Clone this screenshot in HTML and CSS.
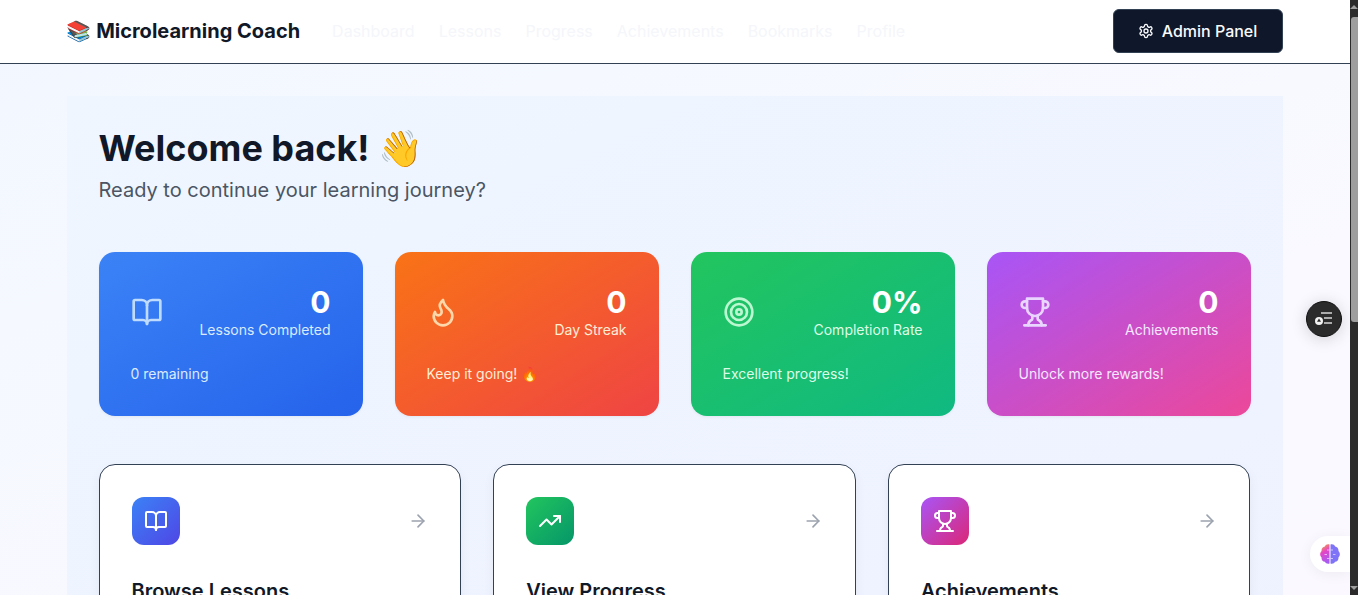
FILE: index.html
```html
<!DOCTYPE html>
<html>
<head>
    <title>Microlearning Coach</title>
    <link rel="stylesheet" href="styles.css">
</head>
<body>
    <div class="page">
        <header class="topbar">
            <div class="topbar-inner">
                <div class="brand"><span class="brand-emoji">📚</span> Microlearning Coach</div>
                <nav class="nav">
                    <a>Dashboard</a>
                    <a>Lessons</a>
                    <a>Progress</a>
                    <a>Achievements</a>
                    <a>Bookmarks</a>
                    <a>Profile</a>
                </nav>
                <button class="admin-button">
                    <svg class="icon-gear" viewBox="0 0 24 24">
                        <path d="M12.22 2h-.44a2 2 0 0 0-2 2v.18a2 2 0 0 1-1 1.73l-.43.25a2 2 0 0 1-2 0l-.15-.08a2 2 0 0 0-2.73.73l-.22.38a2 2 0 0 0 .73 2.73l.15.1a2 2 0 0 1 1 1.72v.51a2 2 0 0 1-1 1.74l-.15.09a2 2 0 0 0-.73 2.73l.22.38a2 2 0 0 0 2.73.73l.15-.08a2 2 0 0 1 2 0l.43.25a2 2 0 0 1 1 1.73V20a2 2 0 0 0 2 2h.44a2 2 0 0 0 2-2v-.18a2 2 0 0 1 1-1.73l.43-.25a2 2 0 0 1 2 0l.15.08a2 2 0 0 0 2.73-.73l.22-.39a2 2 0 0 0-.73-2.73l-.15-.08a2 2 0 0 1-1-1.74v-.5a2 2 0 0 1 1-1.74l.15-.09a2 2 0 0 0 .73-2.73l-.22-.38a2 2 0 0 0-2.73-.73l-.15.08a2 2 0 0 1-2 0l-.43-.25a2 2 0 0 1-1-1.73V4a2 2 0 0 0-2-2z"/>
                        <circle cx="12" cy="12" r="3"/>
                    </svg>
                    Admin Panel
                </button>
            </div>
        </header>

        <div class="content">
            <main class="main">
                <div class="panel">
                    <h1>Welcome back! 👋</h1>
                    <p class="subtitle">Ready to continue your learning journey?</p>

                    <section class="stats">
                        <div class="stat stat-blue">
                            <div class="stat-top">
                                <svg class="stat-icon" viewBox="0 0 24 24">
                                    <path d="M12 7v14"/>
                                    <path d="M3 18a1 1 0 0 1-1-1V4a1 1 0 0 1 1-1h5a4 4 0 0 1 4 4 4 4 0 0 1 4-4h5a1 1 0 0 1 1 1v13a1 1 0 0 1-1 1h-6a3 3 0 0 0-3 3 3 3 0 0 0-3-3z"/>
                                </svg>
                                <div class="stat-value">
                                    <div class="stat-number">0</div>
                                    <div class="stat-label">Lessons Completed</div>
                                </div>
                            </div>
                            <div class="stat-note">0 remaining</div>
                        </div>

                        <div class="stat stat-orange">
                            <div class="stat-top">
                                <svg class="stat-icon" viewBox="0 0 24 24">
                                    <path d="M8.5 14.5A2.5 2.5 0 0 0 11 12c0-1.38-.5-2-1-3-1.072-2.143-.224-4.054 2-6 .5 2.5 2 4.9 4 6.5 2 1.6 3 3.5 3 5.5a7 7 0 1 1-14 0c0-1.153.433-2.294 1-3a2.5 2.5 0 0 0 2.5 2.5z"/>
                                </svg>
                                <div class="stat-value">
                                    <div class="stat-number">0</div>
                                    <div class="stat-label">Day Streak</div>
                                </div>
                            </div>
                            <div class="stat-note">Keep it going! 🔥</div>
                        </div>

                        <div class="stat stat-green">
                            <div class="stat-top">
                                <svg class="stat-icon" viewBox="0 0 24 24">
                                    <circle cx="12" cy="12" r="10"/>
                                    <circle cx="12" cy="12" r="6"/>
                                    <circle cx="12" cy="12" r="2"/>
                                </svg>
                                <div class="stat-value">
                                    <div class="stat-number">0%</div>
                                    <div class="stat-label">Completion Rate</div>
                                </div>
                            </div>
                            <div class="stat-note">Excellent progress!</div>
                        </div>

                        <div class="stat stat-purple">
                            <div class="stat-top">
                                <svg class="stat-icon" viewBox="0 0 24 24">
                                    <path d="M6 9H4.5a2.5 2.5 0 0 1 0-5H6"/>
                                    <path d="M18 9h1.5a2.5 2.5 0 0 0 0-5H18"/>
                                    <path d="M4 22h16"/>
                                    <path d="M10 14.66V17c0 .55-.47.98-.97 1.21C7.85 18.75 7 20.24 7 22"/>
                                    <path d="M14 14.66V17c0 .55.47.98.97 1.21C16.15 18.75 17 20.24 17 22"/>
                                    <path d="M18 2H6v7a6 6 0 0 0 12 0V2Z"/>
                                </svg>
                                <div class="stat-value">
                                    <div class="stat-number">0</div>
                                    <div class="stat-label">Achievements</div>
                                </div>
                            </div>
                            <div class="stat-note">Unlock more rewards!</div>
                        </div>
                    </section>

                    <section class="actions">
                        <div class="action">
                            <div class="action-top">
                                <div class="action-icon action-blue">
                                    <svg viewBox="0 0 24 24">
                                        <path d="M12 7v14"/>
                                        <path d="M3 18a1 1 0 0 1-1-1V4a1 1 0 0 1 1-1h5a4 4 0 0 1 4 4 4 4 0 0 1 4-4h5a1 1 0 0 1 1 1v13a1 1 0 0 1-1 1h-6a3 3 0 0 0-3 3 3 3 0 0 0-3-3z"/>
                                    </svg>
                                </div>
                                <svg class="arrow" viewBox="0 0 24 24"><path d="M5 12h14"/><path d="m12 5 7 7-7 7"/></svg>
                            </div>
                            <h3>Browse Lessons</h3>
                        </div>

                        <div class="action">
                            <div class="action-top">
                                <div class="action-icon action-green">
                                    <svg viewBox="0 0 24 24">
                                        <polyline points="22 7 13.5 15.5 8.5 10.5 2 17"/>
                                        <polyline points="16 7 22 7 22 13"/>
                                    </svg>
                                </div>
                                <svg class="arrow" viewBox="0 0 24 24"><path d="M5 12h14"/><path d="m12 5 7 7-7 7"/></svg>
                            </div>
                            <h3>View Progress</h3>
                        </div>

                        <div class="action">
                            <div class="action-top">
                                <div class="action-icon action-purple">
                                    <svg viewBox="0 0 24 24">
                                        <path d="M6 9H4.5a2.5 2.5 0 0 1 0-5H6"/>
                                        <path d="M18 9h1.5a2.5 2.5 0 0 0 0-5H18"/>
                                        <path d="M4 22h16"/>
                                        <path d="M10 14.66V17c0 .55-.47.98-.97 1.21C7.85 18.75 7 20.24 7 22"/>
                                        <path d="M14 14.66V17c0 .55.47.98.97 1.21C16.15 18.75 17 20.24 17 22"/>
                                        <path d="M18 2H6v7a6 6 0 0 0 12 0V2Z"/>
                                    </svg>
                                </div>
                                <svg class="arrow" viewBox="0 0 24 24"><path d="M5 12h14"/><path d="m12 5 7 7-7 7"/></svg>
                            </div>
                            <h3>Achievements</h3>
                        </div>
                    </section>
                </div>
            </main>
        </div>

        <!-- Floating widgets -->
        <div class="float-toc">
            <svg viewBox="0 0 24 24">
                <path d="M9 6h11M12 11h8M12 16h8"/>
                <circle cx="7" cy="14" r="4" fill="#f2f2f2" stroke="none"/>
                <path d="M7 11.6l2 3.2H5z" fill="#2b2b2b" stroke="none"/>
            </svg>
        </div>
        <div class="float-brain">
            <svg viewBox="2 2 20 20">
                <defs>
                    <linearGradient id="brainLeft" x1="0.3" y1="0" x2="0.6" y2="1">
                        <stop offset="0" stop-color="#f59e42"/>
                        <stop offset="0.4" stop-color="#e346c8"/>
                        <stop offset="1" stop-color="#a45cf5"/>
                    </linearGradient>
                </defs>
                <path fill="url(#brainLeft)" d="M11.5 2.6v18.8c-1.8.6-3.9 0-4.6-1.7-2.2-.2-3.7-2.1-3.3-4.2-1.9-1.5-1.9-4.9 0-6.4-.4-2.3 1.1-4.4 3.3-4.6.7-1.9 2.8-2.7 4.6-1.9z"/>
                <path fill="#7f73f7" d="M12.5 2.6v18.8c1.8.6 3.9 0 4.6-1.7 2.2-.2 3.7-2.1 3.3-4.2 1.9-1.5 1.9-4.9 0-6.4.4-2.3-1.1-4.4-3.3-4.6-.7-1.9-2.8-2.7-4.6-1.9z"/>
                <path fill="none" stroke="#efe4ff" stroke-width="0.7" d="M11.5 8H9M6.5 12.5h2.5M11.5 16.5H9M12.5 8H15M17.5 12.5H15M12.5 16.5H15"/>
            </svg>
        </div>
    </div>

    <div class="scrollbar">
        <div class="scroll-up"></div>
        <div class="scroll-thumb"></div>
        <div class="scroll-track"></div>
        <div class="scroll-down"></div>
    </div>
</body>
</html>
```

FILE: styles.css
```css
* {
    margin: 0;
    padding: 0;
    box-sizing: border-box;
}

html, body {
    height: 100%;
    overflow: hidden;
}

body {
    display: flex;
    font-family: 'Inter', 'Noto Color Emoji', sans-serif;
    color: #0f172a;
    background: #fff;
}

.page {
    flex: 1;
    min-width: 0;
    height: 100%;
    overflow: hidden;
    position: relative;
    background: linear-gradient(to bottom right, #f2f7ff 0%, #f8f9ff 55%, #fbf9ff 100%);
}

/* Header */
.topbar {
    height: 64px;
    padding-right: 1px;
    padding-bottom: 1px;
    background: #fff;
    border-bottom: 1px solid #334155;
}

.topbar-inner {
    max-width: 1280px;
    height: 62px;
    margin: 0 auto;
    padding: 0 32px;
    display: flex;
    align-items: center;
}

.brand {
    font-size: 20px;
    font-weight: 700;
    color: #111827;
    white-space: nowrap;
}

.nav {
    display: flex;
    gap: 24px;
    margin-left: 32px;
    flex: 1;
}

.nav a {
    font-size: 16px;
    font-weight: 400;
    color: #f4f6fa;
}

.admin-button {
    display: flex;
    align-items: center;
    justify-content: center;
    gap: 8px;
    width: 170px;
    height: 44px;
    background: #0f172a;
    color: #f8fafc;
    border: 1px solid #334155;
    border-radius: 6px;
    font-family: inherit;
    font-size: 16px;
    font-weight: 500;
}

.icon-gear {
    width: 16px;
    height: 16px;
    fill: none;
    stroke: currentColor;
    stroke-width: 2;
    stroke-linecap: round;
    stroke-linejoin: round;
}

/* Main panel */
.content {
    padding-right: 1px;
}

.main {
    max-width: 1280px;
    margin: 0 auto;
    padding: 32px 32px 0;
}

.panel {
    padding: 32px;
    background: linear-gradient(to bottom right, #eff6ff 0%, #eef2ff 100%);
}

h1 {
    font-size: 36px;
    line-height: 40px;
    font-weight: 700;
    color: #111827;
}

.subtitle {
    margin-top: 8px;
    font-size: 20px;
    line-height: 28px;
    color: #4b5563;
}

/* Stat cards */
.stats {
    display: grid;
    grid-template-columns: repeat(4, 1fr);
    gap: 32px;
    margin-top: 48px;
}

.stat {
    padding: 32px;
    border-radius: 16px;
    color: #fff;
    box-shadow: 0 1px 3px rgba(0, 0, 0, 0.06);
}

.stat-blue { background: linear-gradient(to bottom right, #3b82f6, #2563eb); --soft: #dbeafe; --icon: #bfdbfe; }
.stat-orange { background: linear-gradient(to bottom right, #f97316, #ef4444); --soft: #ffedd5; --icon: #fed7aa; }
.stat-green { background: linear-gradient(to bottom right, #22c55e, #10b981); --soft: #dcfce7; --icon: #bbf7d0; }
.stat-purple { background: linear-gradient(to bottom right, #a855f7, #ec4899); --soft: #f3e8ff; --icon: #e9d5ff; }

.stat-top {
    display: flex;
    align-items: center;
    justify-content: space-between;
}

.stat-icon {
    width: 32px;
    height: 32px;
    fill: none;
    stroke: var(--icon);
    stroke-width: 2;
    stroke-linecap: round;
    stroke-linejoin: round;
}

.stat-value {
    text-align: right;
}

.stat-number {
    font-size: 30px;
    line-height: 36px;
    font-weight: 700;
}

.stat-label,
.stat-note {
    font-size: 14px;
    line-height: 20px;
    color: var(--soft);
}

.stat-note {
    margin-top: 24px;
}

/* Action cards */
.actions {
    display: grid;
    grid-template-columns: repeat(3, 1fr);
    gap: 32px;
    margin-top: 48px;
}

.action {
    padding: 32px;
    height: 220px;
    background: #fff;
    border: 1px solid #334155;
    border-radius: 16px;
    box-shadow: 0 4px 12px rgba(15, 23, 42, 0.05);
}

.action-top {
    display: flex;
    align-items: center;
    justify-content: space-between;
    margin-bottom: 32px;
}

.action-icon {
    width: 48px;
    height: 48px;
    border-radius: 12px;
    display: flex;
    align-items: center;
    justify-content: center;
}

.action-icon svg {
    width: 24px;
    height: 24px;
    fill: none;
    stroke: #fff;
    stroke-width: 2;
    stroke-linecap: round;
    stroke-linejoin: round;
}

.action-blue { background: linear-gradient(to bottom right, #3b82f6, #4f46e5); }
.action-green { background: linear-gradient(to bottom right, #22c55e, #059669); }
.action-purple { background: linear-gradient(to bottom right, #a855f7, #db2777); }

.arrow {
    width: 20px;
    height: 20px;
    fill: none;
    stroke: #9ca3af;
    stroke-width: 2;
    stroke-linecap: round;
    stroke-linejoin: round;
}

.action h3 {
    font-size: 20px;
    line-height: 28px;
    font-weight: 600;
    color: #111827;
}

/* Floating widgets */
.float-toc {
    position: absolute;
    right: 8px;
    top: 301px;
    width: 36px;
    height: 36px;
    border-radius: 50%;
    background: #2b2b2b;
    border: 1px solid #111;
    box-shadow: 0 2px 16px rgba(0, 0, 0, 0.16);
    display: flex;
    align-items: center;
    justify-content: center;
}

.float-toc svg {
    width: 24px;
    height: 24px;
    fill: none;
    stroke: #d8d8d8;
    stroke-width: 1.6;
}

.float-brain {
    position: absolute;
    right: 0;
    top: 536px;
    width: 40px;
    height: 36px;
    padding-left: 10px;
    background: #fff;
    border-radius: 18px 0 0 18px;
    box-shadow: 0 2px 14px rgba(0, 0, 0, 0.06);
    display: flex;
    align-items: center;
}

.float-brain svg {
    width: 20px;
    height: 20px;
}

/* Window scrollbar */
.scrollbar {
    width: 8px;
    height: 100%;
    background: #2b2b2b;
    display: flex;
    flex-direction: column;
    flex-shrink: 0;
}

.scroll-up,
.scroll-down {
    height: 14px;
    flex-shrink: 0;
    display: flex;
    align-items: center;
    justify-content: center;
}

.scroll-up::before,
.scroll-down::before {
    content: '';
    border-left: 4px solid transparent;
    border-right: 4px solid transparent;
}

.scroll-up::before {
    border-bottom: 4px solid #9e9e9e;
}

.scroll-down::before {
    border-top: 4px solid #9e9e9e;
}

.scroll-thumb {
    height: 305px;
    margin-top: 3px;
    margin-left: 1px;
    background: #9e9e9e;
    border-radius: 3px 0 0 3px;
}

.scroll-track {
    flex: 1;
}
```
